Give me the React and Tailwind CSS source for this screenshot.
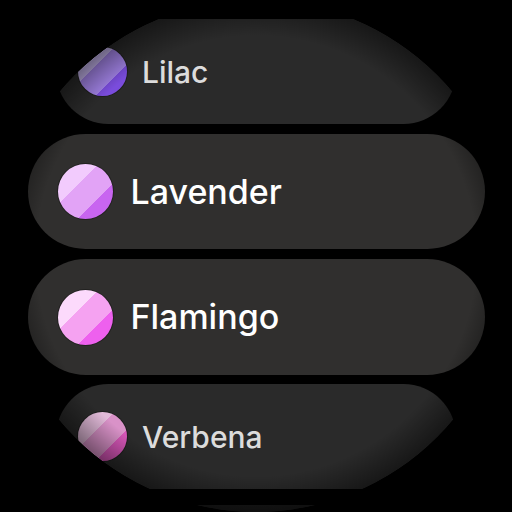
import React from "react";

function Swatch({ size, grad }) {
  return (
    <div
      className={`shrink-0 rounded-full ring-1 ring-black/30 ${size} ${grad}`}
    />
  );
}

export default function App() {
  return (
    <div className="w-[512px] h-[512px] bg-black">
      <div
        className="relative w-[512px] h-[512px] rounded-full overflow-hidden bg-black"
        style={{ fontFamily: "Inter, Roboto, 'Noto Sans', sans-serif" }}
      >
        <div className="flex flex-col items-center pt-[19px]">
          {/* Lilac (scaled, top) */}
          <div className="flex items-center w-[400px] h-[105px] shrink-0 rounded-full bg-[#2a2a2a] pl-[22px] gap-[15px]">
            <Swatch
              size="w-[49px] h-[49px]"
              grad="bg-[linear-gradient(to_bottom_right,#c6b6ee_37%,#a283e6_37%,#a283e6_68%,#7a4cdc_68%)]"
            />
            <span className="text-[30px] leading-none font-medium text-[#dcdcdc]">
              Lilac
            </span>
          </div>

          {/* Lavender */}
          <div className="mt-[10px] flex items-center w-[457px] h-[115px] shrink-0 rounded-full bg-[#302f2e] pl-[30px] gap-[18px]">
            <Swatch
              size="w-[55px] h-[55px]"
              grad="bg-[linear-gradient(to_bottom_right,#f2cbfd_37%,#e2a3f6_37%,#e2a3f6_68%,#c865f0_68%)]"
            />
            <span className="text-[34px] leading-none font-medium text-white">
              Lavender
            </span>
          </div>

          {/* Flamingo */}
          <div className="mt-[10px] flex items-center w-[457px] h-[116px] shrink-0 rounded-full bg-[#302f2e] pl-[30px] gap-[18px]">
            <Swatch
              size="w-[55px] h-[55px]"
              grad="bg-[linear-gradient(to_bottom_right,#fcdafc_37%,#f5a2f1_37%,#f5a2f1_68%,#ee60ee_68%)]"
            />
            <span className="text-[34px] leading-none font-medium text-white">
              Flamingo
            </span>
          </div>

          {/* Verbena (scaled, bottom) */}
          <div className="mt-[9px] flex items-center w-[400px] h-[105px] shrink-0 rounded-full bg-[#2a2a2a] pl-[22px] gap-[15px]">
            <Swatch
              size="w-[49px] h-[49px]"
              grad="bg-[linear-gradient(to_bottom_right,#e2bad9_37%,#d992c8_37%,#d992c8_68%,#d756b8_68%)]"
            />
            <span className="text-[30px] leading-none font-medium text-[#dcdcdc]">
              Verbena
            </span>
          </div>

          {/* next item peeking */}
          <div className="mt-[16px] w-[360px] h-[90px] shrink-0 rounded-full bg-[#1c1c1c]" />
        </div>

        {/* edge vignette */}
        <div className="pointer-events-none absolute inset-0 rounded-full bg-[radial-gradient(circle_closest-side,transparent_86%,rgba(0,0,0,0.45)_100%)]" />
      </div>
    </div>
  );
}
